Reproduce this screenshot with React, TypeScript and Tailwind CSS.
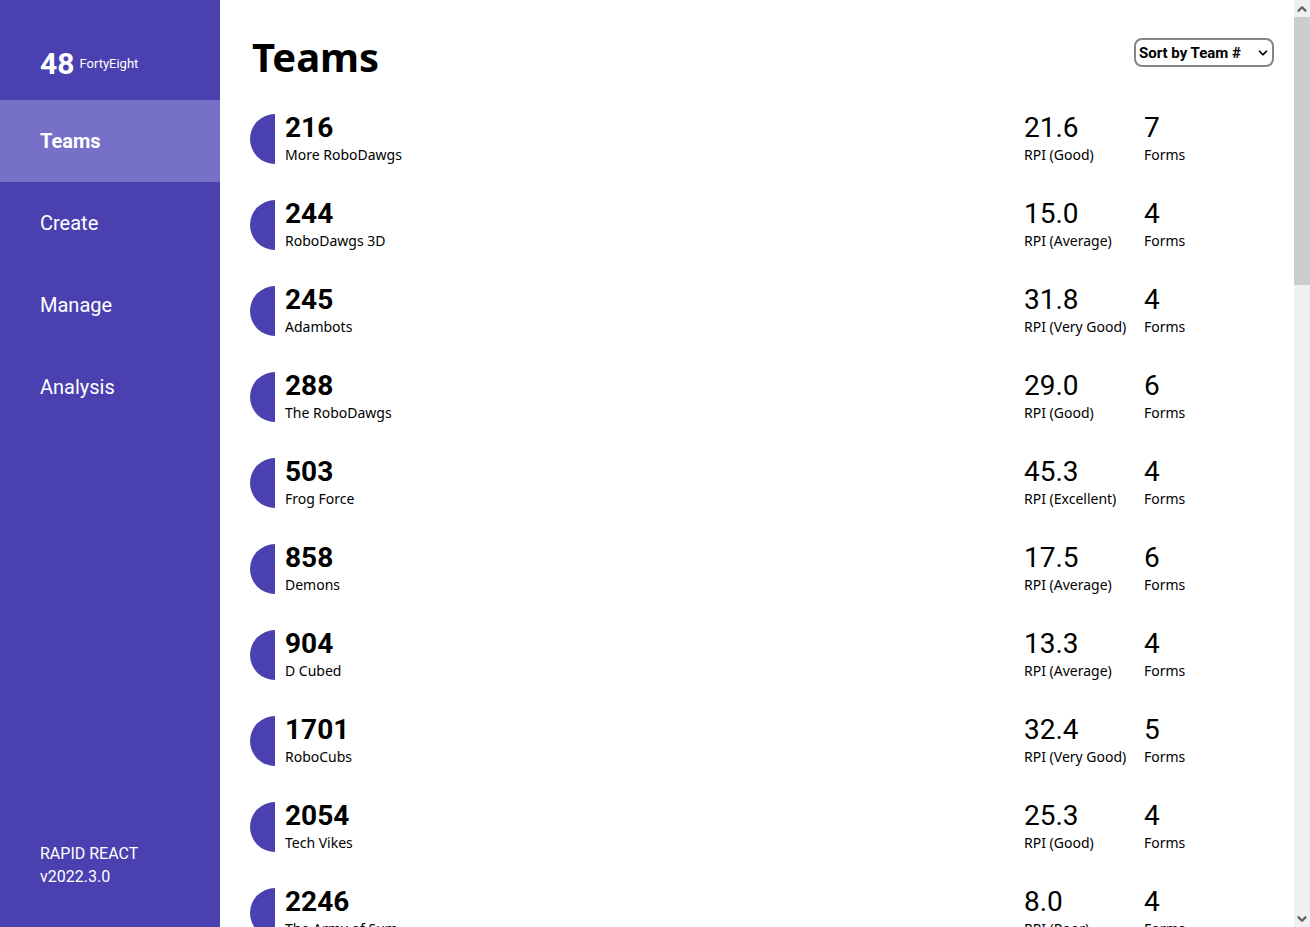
import { ChevronDown, ChevronUp } from "lucide-react";

type Team = { number: string; name: string; rpi: string; rating: string; forms: number };

const teams: Team[] = [
  { number: "216", name: "More RoboDawgs", rpi: "21.6", rating: "Good", forms: 7 },
  { number: "244", name: "RoboDawgs 3D", rpi: "15.0", rating: "Average", forms: 4 },
  { number: "245", name: "Adambots", rpi: "31.8", rating: "Very Good", forms: 4 },
  { number: "288", name: "The RoboDawgs", rpi: "29.0", rating: "Good", forms: 6 },
  { number: "503", name: "Frog Force", rpi: "45.3", rating: "Excellent", forms: 4 },
  { number: "858", name: "Demons", rpi: "17.5", rating: "Average", forms: 6 },
  { number: "904", name: "D Cubed", rpi: "13.3", rating: "Average", forms: 4 },
  { number: "1701", name: "RoboCubs", rpi: "32.4", rating: "Very Good", forms: 5 },
  { number: "2054", name: "Tech Vikes", rpi: "25.3", rating: "Good", forms: 4 },
  { number: "2246", name: "The Army of Sum", rpi: "8.0", rating: "Poor", forms: 4 },
];

const links = ["Teams", "Create", "Manage", "Analysis"];

function Sidebar() {
  return (
    <aside className="flex w-[220px] shrink-0 flex-col bg-[#4a40b0] font-['Roboto',sans-serif] text-white">
      <a href="#home" className="flex h-[100px] items-center gap-[5px] px-10 pt-[27px]">
        <span className="text-[30px] leading-8 font-bold">48</span>
        <span className="text-[13px] leading-4">FortyEight</span>
      </a>
      <nav className="flex flex-col">
        {links.map((link, i) => (
          <a
            key={link}
            href={`#${link.toLowerCase()}`}
            aria-current={i === 0 ? "page" : undefined}
            className={
              i === 0
                ? "flex h-[82px] items-center bg-[#7770c9] px-10 text-[20px] font-bold"
                : "flex h-[82px] items-center px-10 text-[20px]"
            }
          >
            {link}
          </a>
        ))}
      </nav>
      <p className="mt-auto px-10 pb-[39px] text-[16px] leading-[23px]">
        RAPID REACT
        <br />
        v2022.3.0
      </p>
    </aside>
  );
}

function Stat({ value, label }: { value: string | number; label: string }) {
  return (
    <div className="w-[120px] pt-[2px] whitespace-nowrap">
      <div className="font-['Roboto',sans-serif] text-[28px] leading-[30px]">{value}</div>
      <div className="text-[14px] leading-6">{label}</div>
    </div>
  );
}

function TeamRow({ team }: { team: Team }) {
  return (
    <li className="flex h-[86px] items-center pr-[10px]">
      <span className="h-[50px] w-[25px] shrink-0 rounded-l-full bg-[#4a40b0]" />
      <div className="ml-[10px] flex-1 pt-[2px]">
        <div className="font-['Roboto',sans-serif] text-[28px] leading-[30px] font-bold">{team.number}</div>
        <div className="text-[14px] leading-6">{team.name}</div>
      </div>
      <Stat value={team.rpi} label={`RPI (${team.rating})`} />
      <Stat value={team.forms} label="Forms" />
    </li>
  );
}

function ScrollTrack() {
  return (
    <div aria-hidden="true" className="flex w-4 shrink-0 flex-col bg-[#f0f0f0] text-[#606060]">
      <div className="flex h-[17px] items-center justify-center">
        <ChevronUp size={14} strokeWidth={4} />
      </div>
      <div className="flex-1">
        <div className="h-[30%] bg-[#cdcdcd]" />
      </div>
      <div className="flex h-[17px] items-center justify-center">
        <ChevronDown size={14} strokeWidth={4} />
      </div>
    </div>
  );
}

export default function App() {
  return (
    <div className="flex h-screen bg-white font-['Noto_Sans',sans-serif] text-black">
      <Sidebar />
      <main className="min-w-0 flex-1 overflow-y-auto pr-5 pl-[30px] [scrollbar-width:none]">
        <header className="flex h-24 items-start justify-between pt-[27px]">
          <h1 className="pl-[2px] text-[40px] leading-[60px] font-bold">Teams</h1>
          <div className="relative mt-[11px] flex items-center">
            <select
              aria-label="Sort teams"
              className="h-[29px] w-[140px] appearance-none rounded-lg border-2 border-[#858585] bg-white pt-px pl-[3px] font-['Roboto',sans-serif] text-[15px] font-bold"
            >
              <option>Sort by Team #</option>
              <option>Sort by RPI</option>
            </select>
            <ChevronDown size={14} strokeWidth={3} className="pointer-events-none absolute right-1" />
          </div>
        </header>
        <ul>
          {teams.map((team) => (
            <TeamRow key={team.number} team={team} />
          ))}
        </ul>
      </main>
      <ScrollTrack />
    </div>
  );
}
